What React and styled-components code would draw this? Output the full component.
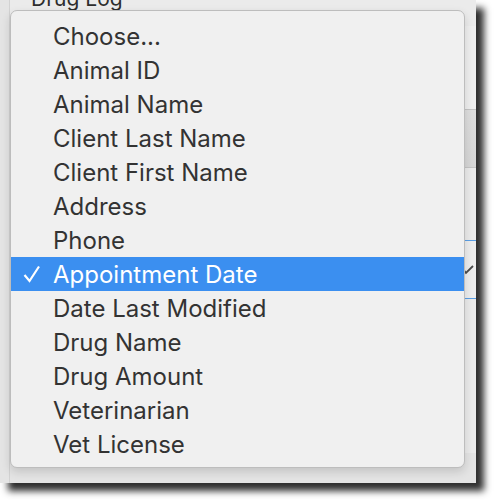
import React from 'react';
import styled, { createGlobalStyle } from 'styled-components';

const GlobalStyle = createGlobalStyle`
  html, body {
    margin: 0;
    padding: 0;
    background: #ffffff;
    overflow: hidden;
  }
  body {
    font-family: Inter, "Liberation Sans", Arial, sans-serif;
  }
`;

const Page = styled.div`
  width: 494px;
  height: 500px;
  background: #ffffff;
`;

// the app window behind the popup, cropped at the top
const Window = styled.div`
  position: relative;
  width: 476px;
  height: 483px;
  background: #ebebeb;
  box-shadow: 8px 8px 7px rgba(0, 0, 0, 0.82);
  overflow: hidden;
  display: flex;
`;

const SideStrip = styled.div`
  width: 9px;
  flex: none;
  background: #e4e4e4;
  border-right: 1px solid #d2d2d2;
`;

const Backdrop = styled.div`
  flex: 1;
  display: flex;
  flex-direction: column;
`;

const WindowTitle = styled.div`
  height: 40px;
  margin-top: -11px;
  padding-left: 21px;
  font-size: 21px;
  color: #2e2e2e;
  line-height: 20px;
`;

const FieldRow = styled.div`
  height: ${p => p.h}px;
  flex: none;
  display: flex;
  justify-content: flex-end;
  align-items: flex-start;
  background: ${p => p.bg || 'transparent'};
`;

const GrayButton = styled.div`
  width: 200px;
  height: 57px;
  border-top: 1px solid #c4c4c4;
  border-bottom: 1px solid #c4c4c4;
  background: linear-gradient(#dedede, #d6d6d6);
`;

const SelectBox = styled.div`
  width: 200px;
  height: 57px;
  border-top: 1px solid #5a9fe6;
  border-bottom: 1px solid #5a9fe6;
  background: #eeeeee;
  display: flex;
  align-items: center;
  justify-content: flex-end;
  padding-right: 2px;
`;

const Menu = styled.div`
  position: absolute;
  top: 10px;
  left: 10px;
  width: 453px;
  padding: 8px 0 6px;
  background: #f0f0f0;
  border: 1px solid #bdbdbd;
  border-radius: 7px;
  box-shadow: 0 4px 10px rgba(0, 0, 0, 0.14);
  display: flex;
  flex-direction: column;
`;

const Item = styled.div`
  position: relative;
  height: 34px;
  padding-left: 42px;
  display: flex;
  align-items: center;
  font-size: 24px;
  color: ${p => (p.selected ? '#ffffff' : '#333333')};
  background: ${p => (p.selected ? '#3b8ff0' : 'transparent')};
  white-space: nowrap;
`;

const Check = styled.svg`
  position: absolute;
  left: 12px;
  top: 8px;
`;

const options = [
  'Choose...',
  'Animal ID',
  'Animal Name',
  'Client Last Name',
  'Client First Name',
  'Address',
  'Phone',
  'Appointment Date',
  'Date Last Modified',
  'Drug Name',
  'Drug Amount',
  'Veterinarian',
  'Vet License',
];

const selected = 'Appointment Date';

export default function App() {
  return (
    <Page>
      <GlobalStyle />
      <Window>
        <SideStrip />
        <Backdrop>
          <WindowTitle>Drug Log</WindowTitle>
          <FieldRow h={83} bg="#efefef" />
          <FieldRow h={60}>
            <GrayButton />
          </FieldRow>
          <FieldRow h={71} />
          <FieldRow h={60}>
            <SelectBox>
              <svg width="12" height="10" viewBox="0 0 12 10">
                <polyline points="1,4 4,8 11,1" fill="none" stroke="#4a4a4a" strokeWidth="1.8" />
              </svg>
            </SelectBox>
          </FieldRow>
          <FieldRow h={153} />
          <FieldRow h={30} bg="#e4e4e4" />
        </Backdrop>
        <Menu>
          {options.map(o => (
            <Item key={o} selected={o === selected}>
              {o === selected && (
                <Check width="18" height="18" viewBox="0 0 18 18">
                  <polyline points="1.5,10 6.5,16 16,1.5" fill="none" stroke="#ffffff" strokeWidth="2.2" />
                </Check>
              )}
              {o}
            </Item>
          ))}
        </Menu>
      </Window>
    </Page>
  );
}
